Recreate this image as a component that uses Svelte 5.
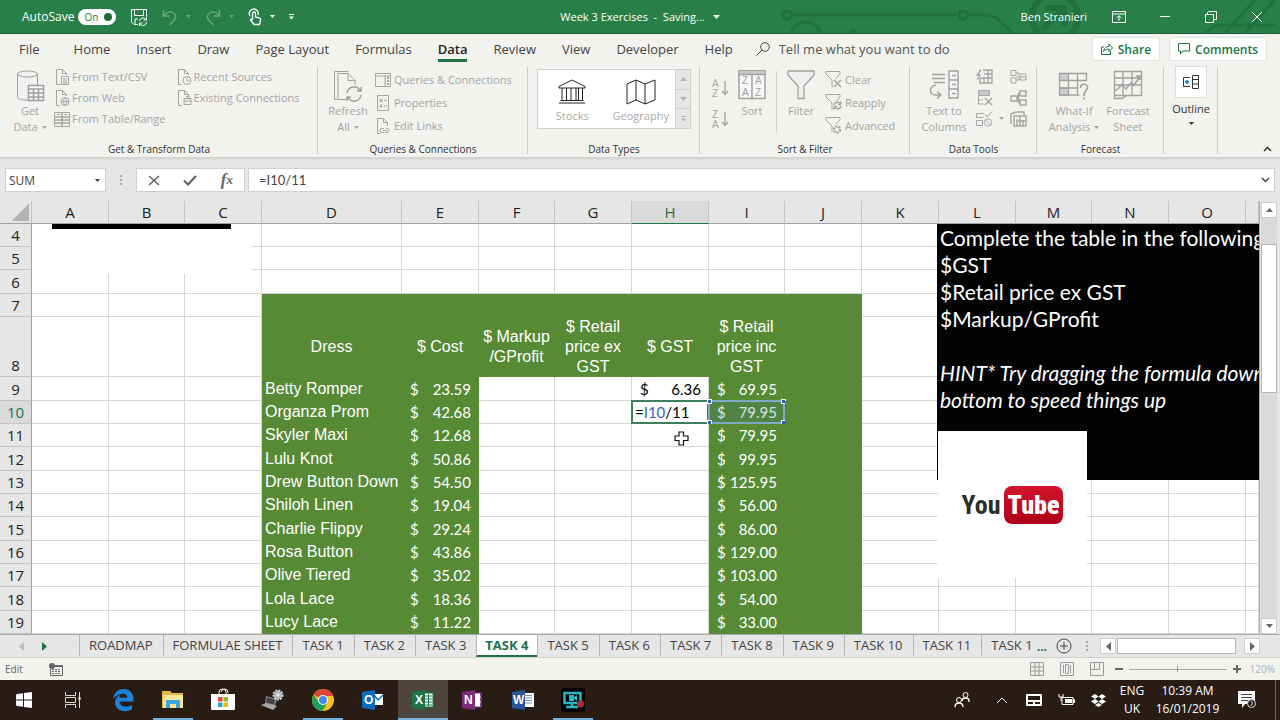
<script>
	const menu = ['File', 'Home', 'Insert', 'Draw', 'Page Layout', 'Formulas', 'Data', 'Review', 'View', 'Developer', 'Help'];

	const columns = [
		{ name: 'A', width: 77 },
		{ name: 'B', width: 76 },
		{ name: 'C', width: 77 },
		{ name: 'D', width: 140 },
		{ name: 'E', width: 77 },
		{ name: 'F', width: 76 },
		{ name: 'G', width: 77 },
		{ name: 'H', width: 77 },
		{ name: 'I', width: 76 },
		{ name: 'J', width: 77 },
		{ name: 'K', width: 77 },
		{ name: 'L', width: 77 },
		{ name: 'M', width: 76 },
		{ name: 'N', width: 77 },
		{ name: 'O', width: 77 },
		{ name: '', width: 0 }
	];

	const headings = {
		D: 'Dress',
		E: '$ Cost',
		F: '$ Markup\n/GProfit',
		G: '$ Retail\nprice ex\nGST',
		H: '$ GST',
		I: '$ Retail\nprice inc\nGST'
	};

	const dresses = [
		['Betty Romper', '23.59', '69.95'],
		['Organza Prom', '42.68', '79.95'],
		['Skyler Maxi', '12.68', '79.95'],
		['Lulu Knot', '50.86', '99.95'],
		['Drew Button Down', '54.50', '125.95'],
		['Shiloh Linen', '19.04', '56.00'],
		['Charlie Flippy', '29.24', '86.00'],
		['Rosa Button', '43.86', '129.00'],
		['Olive Tiered', '35.02', '103.00'],
		['Lola Lace', '18.36', '54.00'],
		['Lucy Lace', '11.22', '33.00']
	];

	const rows = Array.from({ length: 16 }, (_, i) => i + 4);

	const sheets = ['ROADMAP', 'FORMULAE SHEET', ...Array.from({ length: 11 }, (_, i) => `TASK ${i + 1}`)];

	let activeMenu = $state('Data');
	let activeSheet = $state('TASK 4');
	let autoSave = $state(true);
	let zoom = $state(50);
	let formula = $state('=I10/11');

	function isGreen(row, col) {
		if (row < 7 || !'DEFGHIJ'.includes(col) || !col) return false;
		return row < 9 || !'FGH'.includes(col);
	}

	function money(row, col) {
		const dress = dresses[row - 9];
		if (!dress) return '';
		if (col === 'E') return dress[1];
		if (col === 'I') return dress[2];
		if (col === 'H' && row === 9) return '6.36';
		return '';
	}

	// [width, height, markup]
	const icons = {
		save: [18, 18, '<path d="M1.500 1.500h15v7M8 16.500h-4l-2.500-2.500v-12.500M4.500 1.500v6h9v-6M5 16v-5h3"/><path d="M9.500 13a3.500 3.500 0 0 1 6-2l1 1m0-3v3h-3M16.500 14a3.500 3.500 0 0 1-6 2.500l-1-1m0 2.500v-3h3"/>'],
		undo: [16, 16, '<path stroke-width="1.500" d="M1.500 1v6h6M1.500 7c3-4 7-5 10-3s3 5 0 8l-4 4"/>'],
		redo: [16, 16, '<path stroke-width="1.500" d="M14.500 1v6h-6M14.500 7c-3-4-7-5-10-3s-3 5 0 8l4 4"/>'],
		touch: [14, 18, '<path stroke-width="1.300" d="M2 8a4.500 4.500 0 1 1 8-1M4.500 12V5.500a1.500 1.500 0 0 1 3 0V9l4 1q1.500.500 1 2l-1 4.500H6L2.500 12q0-1.500 2 0"/>'],
		display: [14, 12, '<path d="M.500.500h13v11h-13zM.500 3h13M7 10V5M4.500 7L7 4.800 9.500 7"/>'],
		restore: [12, 12, '<path d="M.500 3.500h8v8h-8zM2.500 3.500v-2l1-1h8v8h-3"/>'],
		close: [12, 12, '<path d="M1 1l10 10M11 1L1 11"/>'],
		search: [14, 14, '<circle cx="9" cy="5" r="4.300"/><path d="M6 8L.500 13.500"/>'],
		share: [12, 12, '<path d="M3 4H.500v7.500h9V8M2.500 8.500c.500-4 3-5 5.500-5V1l3.500 4L8 8.500V6c-2 0-4 .500-5.500 2.500z"/>'],
		comment: [12, 12, '<path d="M.500.500h11v7.500H5L2.500 11V8h-2z"/>'],
		database: [28, 32, '<path fill="#f0f0f0" d="M1.500 4v23c0 2 4 3 9 3h2V18h9V4"/><ellipse cx="11.500" cy="4" rx="10" ry="3"/><path fill="#f8f8f8" stroke-width="1.500" d="M12.500 15.500h15v15h-15zM12.500 19h15M12.500 23h15M12.500 27h15M17.500 19v11M22.500 19v11"/>'],
		text: [16, 16, '<path d="M6.500 15.500h-4V.500h6l4 4V6M8.500.500v4h4M7.500 7.500h7v8h-7zM9 10h4M9 12h4M9 14h4"/>'],
		web: [16, 16, '<path d="M6 15.500H2.500V.500h6l4 4V6M8.500.500v4h4"/><circle cx="11" cy="11.500" r="4"/><path d="M7 11.500h8M11 7.500c-2 2.500-2 5.500 0 8c2-2.500 2-5.500 0-8"/>'],
		table: [16, 16, '<path d="M.500 1.500h15v14h-15z"/><path stroke-width="1.500" d="M.500 6h15M.500 9h15M.500 12h15M8 1v14"/><path d="M3 3.500h3M10 3.500h3"/>'],
		recent: [16, 16, '<path d="M6 15.500H2.500V.500h6l4 4V6M8.500.500v4h4"/><circle cx="11" cy="11.500" r="4"/><path d="M11 9v3h2.500"/>'],
		existing: [16, 16, '<path d="M6 15.500H2.500V.500h6l4 4V6M8.500.500v4h4M8 8.500h7v6H8zM8 11h7M10 6.500h3v2"/>'],
		refresh: [30, 32, '<path d="M4 29.500H1.500v-28h14M14 29.500H5v-26h10l7 7V15M15 3.500v7h7"/><path stroke-width="1.500" d="M14 23a7 7 0 0 1 12-4l2 2m0-4v4h-4M28 25a7 7 0 0 1-12 4l-2-2m0 4v-4h4"/>'],
		queries: [16, 16, '<path d="M.500 1.500h15v13H.500zM.500 4h15M10 4v10"/><path stroke-width="2" stroke-dasharray="2 1" d="M13 5v8"/>'],
		properties: [16, 16, '<path d="M2.500.500h11v15h-11zM5 4.500h2v2H5zM5 10h2v2H5zM9 5.500h3M9 11h3"/>'],
		links: [16, 16, '<path d="M5 15.500H2.500V.500h6l4 4V8M8.500.500v4h4"/><path d="M9 10.500H7a2 2 0 0 0 0 4h2M11 10.500h1a2 2 0 0 1 0 4h-2M8 12.500h4"/>'],
		stocks: [28, 26, '<path d="M1 9v-1.500L14 1l13 6.500V9zM4 9v12M8.500 9v12M13 9v12M18 9v12M20.500 9v12M24.500 9v12M2.500 21.500h23M1 24h26"/>'],
		geography: [30, 26, '<path d="M1 5l9-4 9 4 10-4v20l-10 4-9-4-9 4zM10 1v20M19 5v20"/>'],
		sortAz: [16, 18, '<path stroke-width="1.400" d="M13 2v13M10 12l3 3.500 3-3.500"/><text x="0" y="8">A</text><text x="0" y="18">Z</text>'],
		sortZa: [16, 18, '<path stroke-width="1.400" d="M13 2v13M10 12l3 3.500 3-3.500"/><text x="0" y="8">Z</text><text x="0" y="18">A</text>'],
		sort: [28, 30, '<path fill="#c8c8c8" d="M.500.500h27v4H.500z"/><path fill="#f8f8f8" stroke-width="1.500" d="M1 4.500h13v24H1zM14 4.500h13v24H14z"/><text x="4" y="14">Z</text><text x="4" y="26">A</text><text x="17" y="14">A</text><text x="17" y="26">Z</text>'],
		filter: [28, 30, '<path fill="#efefef" stroke-width="1.300" d="M1 1h26v4L17 16v12.500h-6V16L1 5z"/>'],
		clear: [17, 17, '<path d="M7 15.500V9L1 3V.500h14V3l-4.500 5M7 15.500h1"/><path stroke-width="1.400" d="M9 9l7 7M16 9l-7 7"/>'],
		reapply: [17, 17, '<path d="M7 15.500V9L1 3V.500h14V3l-4 4"/><path stroke-width="1.400" d="M9 11c1-4 6-3 7-1V7.500m0 3h-3M16 12c-1 4-6 3-7 1v2.500m0-3h3"/>'],
		advanced: [17, 17, '<path d="M7 15.500V9L1 3V.500h14V3l-4 4"/><circle cx="12" cy="12.500" r="3" stroke-width="2.500" stroke-dasharray="2 1"/>'],
		columns: [30, 30, '<path stroke-width="1.300" d="M3 4.500h13M3 8.500h13M5 12.500h11M7 15c-8 2-7 10 0 10h4M8 21.500l4 3.500-4 3.500"/><path fill="#f5f5f5" stroke-width="1.400" d="M20 1h9v27h-9zM20 10h9M20 19h9M23 5.500h4M23 14.500h4M23 23.500h4"/>'],
		flash: [17, 16, '<path stroke-width="1.300" d="M7 1h9v13H4v-5M4 9h12M8 5h8M8 9v5M12 1v13"/><path stroke-width="1.300" d="M5 .500L1 6h3l-3 5"/>'],
		duplicates: [17, 16, '<path fill="#c8c8c8" d="M2.500.500h11v5h-11z"/><path d="M2.500 6v8h5M3 10h4"/><path stroke-width="1.500" d="M9 8l7 7M16 8l-7 7"/>'],
		validate: [17, 16, '<path d="M8 2.500H.500v4h7M.500 14.500v-5h6v5zM9 3l2 3 5-5.500"/><circle cx="12" cy="11.500" r="3.700"/><path d="M9.500 9l5 5"/>'],
		consolidate: [17, 16, '<path d="M1 1.500h5v5H1zM1 9h5v5H1zM10 5h6v6h-6zM6 8h3M6 4h3v2M6 11h3v-2M10 8h6"/>'],
		relations: [17, 16, '<path stroke-width="1.400" d="M1 6h6v5H1zM10 1h6v5h-6zM10 10h6v5h-6zM7 8h1.500V3.500H10M8.500 8v4.500H10"/>'],
		model: [17, 16, '<path stroke-width="1.400" d="M1 13V3l5-2h8v3M4 15V5h12v10zM7 15V8M10 15V6M13 15V9M8 10h7"/>'],
		whatif: [32, 30, '<path fill="#cfcfcf" d="M1.500 3.500h9v7h-9zM1.500 18h9v7h-9z"/><path stroke-width="1.300" d="M28.500 11V3.500h-27v21.500h20M1.500 10.500h27M1.500 18h18M10.500 3.500v21.500M19.500 3.500v21.500"/><path stroke-width="1.600" d="M22.500 18c0-6 8-4 7 0-1 3-3.500 3-3.500 8M26 27.500v2"/>'],
		forecast: [30, 30, '<path stroke-width="1.300" d="M1.500 1.500h27v24h-15l-4 3h-8zM1.500 8h27M1.500 15h27M10 1.500v24M19 1.500v24M1.500 25.500h12"/><path stroke-width="1.500" d="M2 21l7-6 4 4 5-6 3 2 6-8M23 6h4v4"/>'],
		outline: [16, 14, '<path d="M9.500.500h6v13h-6zM9.500 4.500h6M9.500 9h6M7 2.500H.500v9H7" stroke="#333"/><path d="M4 5v4M2 7h4" stroke="#2a8dd4" stroke-width="2"/>'],
		caret: [5, 3, '<path class="f" d="M0 0h5L2.500 3z"/>'],
		up: [7, 4, '<path class="f" d="M0 4h7L3.500 0z"/>'],
		down: [7, 4, '<path class="f" d="M0 0h7L3.500 4z"/>'],
		left: [5, 9, '<path class="f" d="M5 0v9L0 4.500z"/>'],
		right: [5, 9, '<path class="f" d="M0 0v9l5-4.500z"/>'],
		chevron: [9, 6, '<path stroke-width="1.500" d="M1 1l3.500 3.500L8 1"/>'],
		chevronUp: [9, 6, '<path stroke-width="1.500" d="M1 5l3.500-3.500L8 5"/>'],
		bars: [5, 6, '<path class="f" d="M0 0h5v1H0zM0 2.500h5L2.500 5.500z"/>'],
		cancel: [12, 11, '<path stroke-width="1.600" d="M1 1l10 9M11 1L1 10"/>'],
		enter: [14, 11, '<path stroke-width="2.200" d="M1 5.500L5 9.500 13 1"/>'],
		macro: [14, 13, '<path d="M4 2.500h9.500v10H1.500V6"/><circle class="f" cx="3" cy="3" r="3"/><path stroke-width="2" d="M6 3h7"/><path stroke-dasharray="2 1" d="M3 6.500h9M3 8.500h9M3 10.500h9"/>'],
		normal: [14, 14, '<path d="M.500.500h13v13H.500zM.500 5h13M.500 9h13M5 .500v13M9 .500v13"/>'],
		pageLayout: [14, 14, '<path d="M.500.500h13v13H.500zM3.500 3v8M10.500 3v8M5.500 2.500h3v9h-3z"/>'],
		pageBreak: [14, 14, '<path d="M.500.500h13v13H.500zM4.500.500v7h5v-7M.500 7.500h4"/>'],
		plus: [8, 8, '<path stroke-width="2" d="M4 0v8M0 4h8"/>'],
		minus: [8, 8, '<path stroke-width="2" d="M0 4h8"/>'],
		addSheet: [16, 16, '<circle cx="8" cy="8" r="7"/><path d="M8 4v8M4 8h8"/>'],
		windows: [16, 16, '<path class="f" d="M0 2.300l7-1V7.500H0zM8 1.100L16 0v7.500H8zM0 8.500h7v6.200l-7-1zM8 8.500h8V16l-8-1.100z"/>'],
		taskview: [18, 16, '<path stroke="#ddd" d="M1.500 0v3.500h10V0M1.500 16v-3.500h10V16M1.500 5.500h10v5h-10zM15.500 0v5M15.500 8v8"/><path stroke="#fff" stroke-width="2" d="M15.500 5v3"/>'],
		edge: [22, 22, '<path fill="#1c83d8" stroke="none" d="M1 10C2 4 6 0 11.500 0 18 0 21.500 4.500 21.500 10v2.500H7.500c.500 5.500 7.500 6.500 12.500 3.500v4.500C12 24.500 2.500 21 3 13c.200-3.500 2.500-6 5.500-7.500C7.800 6.500 7.400 7.500 7.400 8.800h8c0-6-9.500-5.300-14.400 1.200z"/>'],
		folder: [22, 20, '<path fill="#e9b64a" stroke="none" d="M0 1h8l2 2h11v15H0z"/><path fill="#fde69a" stroke="none" d="M1 5h20v13H1z"/><path fill="#3ca5dc" stroke="none" d="M4 18v-7q0-1 1-1h12q1 0 1 1v7h-4v-4H8v4z"/>'],
		store: [24, 24, '<path stroke="#fff" d="M8 6V4q0-3 3.500-3T15 4v2M10 4q1-3 4-3t3 4"/><path fill="#fff" stroke="none" d="M0 6h24v15q0 1-1 1H1q-1 0-1-1z"/><path fill="#e64a26" stroke="none" d="M7 9h4.500v4.500H7z"/><path fill="#8cbd18" stroke="none" d="M12.500 9H17v4.500h-4.500z"/><path fill="#2a9fe0" stroke="none" d="M7 14.500h4.500V19H7z"/><path fill="#f5b800" stroke="none" d="M12.500 14.500H17V19h-4.500z"/>'],
		laptop: [24, 22, '<path fill="#85878a" stroke="none" d="M5 7l11 3-2 7L4 14z"/><path fill="#414347" stroke="none" d="M6 8.500l8 2-1 5-8-2z"/><path fill="#aaa" stroke="none" d="M0 16l5-2 11 3-4 4z"/><circle cx="17" cy="6" r="4.500" stroke="#d6d6d6" stroke-width="2" stroke-dasharray="2 1"/><circle cx="17" cy="6" r="4" fill="#b9bdc2" stroke="none"/><circle cx="17" cy="6" r="1.500" fill="#eee" stroke="none"/>'],
		chrome: [22, 22, '<circle cx="11" cy="11" r="11" fill="#fbc116" stroke="none"/><path fill="#dc4437" stroke="none" d="M11 11L1.500 5.500A11 11 0 0 1 20.500 5.500L21 7H11z"/><path fill="#1ba260" stroke="none" d="M1.500 5.500A11 11 0 0 0 10.500 22L15 14 11 11 6 12z"/><circle cx="11" cy="11" r="5" fill="#fff" stroke="none"/><circle cx="11" cy="11" r="4" fill="#4587f3" stroke="none"/>'],
		outlook: [22, 20, '<path fill="#fff" stroke="none" d="M11 4h10v11H11z"/><path stroke="#1072c4" stroke-width="1.500" d="M12 5l4 5 5-5"/><path fill="#0d6cbd" stroke="none" d="M0 2l13-2v20L0 18z"/><text x="2" y="14" class="app">O</text>'],
		excel: [22, 20, '<path fill="#fff" stroke="#1b7544" d="M11 3h10v14H11z"/><path stroke="#1b7544" d="M12 6h8M12 9h8M12 12h8M12 15h8M16.500 4v12"/><path fill="#1b7544" stroke="none" d="M0 2l13-2v20L0 18z"/><text x="3" y="14" class="app">X</text>'],
		onenote: [22, 20, '<path fill="#fff" stroke="#7f397f" d="M11 3h8v14h-8z"/><path stroke="#7f397f" stroke-width="2" d="M19 3v3M19 8v3M19 13v3"/><path fill="#7d2a7d" stroke="none" d="M0 2l13-2v20L0 18z"/><text x="2" y="14" class="app">N</text>'],
		word: [22, 20, '<path fill="#fff" stroke="none" d="M11 3h11v14H11z"/><path stroke="#7390bd" d="M12 5.500h8M12 8h8M12 10.500h8M12 13h8"/><path fill="#2a5699" stroke="none" d="M0 2l13-2v20L0 18z"/><text x="1" y="14" class="app">W</text>'],
		recorder: [24, 24, '<rect width="24" height="24" rx="3" fill="#000" stroke="none"/><path stroke="#27b6c7" stroke-width="2.500" d="M3.500 5h16v10h-16zM11 15v3M5 19h12"/><path fill="#27b6c7" stroke="none" d="M8 7h5v2l3-2v6l-3-2v2H8z"/><circle cx="19.500" cy="16" r="3.500" fill="#b62735" stroke="none"/>'],
		people: [16, 16, '<circle cx="5" cy="8" r="2.500"/><circle cx="11.500" cy="3" r="2.500"/><path stroke-width="1.400" d="M1 15q0-4 4-4t4 4M8 9q0-3 3.500-3T15 9v1"/>'],
		tray: [12, 7, '<path d="M1 6l5-5 5 5"/>'],
		keyboard: [16, 12, '<rect width="16" height="12" rx="1" fill="#fff" stroke="none"/><path fill="#261a13" stroke="none" d="M2 2h12v4H2zM2 8h5v2H2zM9 8h5v2H9z"/>'],
		battery: [17, 14, '<path d="M4 4.500h11v7H4zM15.500 6.500h1v3h-1zM1 1v3h4V1M3 4v4"/><path class="f" d="M7 6h7v4H7z"/>'],
		dropbox: [15, 13, '<path class="f" d="M4 0L0 2.500 4 5l3.500-2.500zM11 0L7.500 2.500 11 5l4-2.500zM4 5L0 7.500 4 10l3.500-2.500zM11 5L7.500 7.500 11 10l4-2.500zM7.500 9L4 11l3.500 2 3.500-2z"/>'],
		notice: [18, 18, '<path class="f" d="M0 0h17v13H7l-3 4v-4H0z"/><path stroke="#444" d="M3 3.500h11M3 6.500h11M3 9.500h7"/><circle cx="13.500" cy="12.500" r="4" fill="#261a13" stroke="#ddd"/><path stroke="#ddd" d="M13 10q3 2 0 5"/>'],
		cursor: [15, 15, '<path fill="#fff" stroke="#111" stroke-width="1.200" d="M5 1h4.500v4H14v4.500H9.500V14H5V9.500H1V5h4z"/>']
	};

	const taskApps = [
		{ icon: 'edge', label: 'Edge' },
		{ icon: 'folder', label: 'File Explorer', running: true },
		{ icon: 'store', label: 'Store' },
		{ icon: 'laptop', label: 'Device settings' },
		{ icon: 'chrome', label: 'Chrome', running: true },
		{ icon: 'outlook', label: 'Outlook' },
		{ icon: 'excel', label: 'Excel', running: true, active: true },
		{ icon: 'onenote', label: 'OneNote' },
		{ icon: 'word', label: 'Word' },
		{ icon: 'recorder', label: 'Screen recorder', running: true }
	];
</script>

{#snippet icon(name)}
	<svg class="icon" width={icons[name][0]} height={icons[name][1]} viewBox="0 0 {icons[name][0]} {icons[name][1]}" aria-hidden="true">
		{@html icons[name][2]}
	</svg>
{/snippet}

{#snippet big(name, first, second = '', arrow = false)}
	<button class="big" disabled>
		<span class="big__icon">{@render icon(name)}</span>
		<span>{first}</span>
		{#if second || arrow}
			<span class="big__line">{second}{#if arrow}{@render icon('caret')}{/if}</span>
		{/if}
	</button>
{/snippet}

{#snippet small(name, label)}
	<button class="small" disabled>{@render icon(name)}<span>{label}</span></button>
{/snippet}

<div class="screen">
	<header class="title">
		<svg class="title__art" width="500" height="33" viewBox="0 0 500 33" aria-hidden="true">
			<circle cx="7" cy="15" r="4" />
			<path d="M12 15h164M187 15h18q10 0 16 7l14 13M425 33l12-8h58M445 33l30-33M465 33l30-33" />
			<circle cx="26" cy="37" r="15" />
			<circle cx="183" cy="15" r="4" />
			<circle cx="275" cy="17" r="23" stroke-width="6" />
			<path d="M262 30l22-22M266 8h18v18" stroke-width="6" />
			<circle cx="73" cy="33" r="2" />
		</svg>
		<div class="title__left">
			<label class="autosave">
				<span>AutoSave</span>
				<input type="checkbox" bind:checked={autoSave} />
				<span class="autosave__pill">{autoSave ? 'On' : 'Off'}<i></i></span>
			</label>
			<button class="bare" aria-label="Save">{@render icon('save')}</button>
			<button class="bare faded" aria-label="Undo">{@render icon('undo')}{@render icon('caret')}</button>
			<button class="bare faded" aria-label="Redo">{@render icon('redo')}{@render icon('caret')}</button>
			<button class="bare" aria-label="Touch mode">{@render icon('touch')}{@render icon('caret')}</button>
			<button class="bare" aria-label="Customize toolbar">{@render icon('bars')}</button>
		</div>
		<button class="bare title__doc">Week 3 Exercises&nbsp; -&nbsp; Saving... {@render icon('down')}</button>
		<div class="title__right">
			<span class="user">Ben Stranieri</span>
			<button class="bare win" aria-label="Ribbon display options">{@render icon('display')}</button>
			<button class="bare win" aria-label="Minimize"><span class="dash"></span></button>
			<button class="bare win" aria-label="Restore">{@render icon('restore')}</button>
			<button class="bare win" aria-label="Close">{@render icon('close')}</button>
		</div>
	</header>

	<nav class="menu">
		{#each menu as item}
			<button class="menu__item" class:is-active={activeMenu === item} onclick={() => (activeMenu = item)}>{item}</button>
		{/each}
		<label class="tell">
			{@render icon('search')}
			<input type="text" aria-label="Tell me what you want to do" placeholder="Tell me what you want to do" />
		</label>
		<div class="menu__actions">
			<button class="action">{@render icon('share')}Share</button>
			<button class="action">{@render icon('comment')}Comments</button>
		</div>
	</nav>

	<section class="ribbon">
		<div class="group group--get">
			<div class="group__body">
				{@render big('database', 'Get', 'Data', true)}
				<div class="stack stack--tight">
					{@render small('text', 'From Text/CSV')}
					{@render small('web', 'From Web')}
					{@render small('table', 'From Table/Range')}
				</div>
				<div class="stack stack--tight">
					{@render small('recent', 'Recent Sources')}
					{@render small('existing', 'Existing Connections')}
				</div>
			</div>
			<div class="group__label">Get &amp; Transform Data</div>
		</div>
		<div class="group group--wide">
			<div class="group__body">
				{@render big('refresh', 'Refresh', 'All', true)}
				<div class="stack">
					{@render small('queries', 'Queries & Connections')}
					{@render small('properties', 'Properties')}
					{@render small('links', 'Edit Links')}
				</div>
			</div>
			<div class="group__label">Queries &amp; Connections</div>
		</div>
		<div class="group group--types">
			<div class="group__body">
				<div class="gallery">
					<button class="gallery__item">{@render icon('stocks')}<span>Stocks</span></button>
					<button class="gallery__item">{@render icon('geography')}<span>Geography</span></button>
					<div class="gallery__scroll">
						<button aria-label="Previous row">{@render icon('up')}</button>
						<button aria-label="Next row">{@render icon('down')}</button>
						<button aria-label="More">{@render icon('bars')}</button>
					</div>
				</div>
			</div>
			<div class="group__label">Data Types</div>
		</div>
		<div class="group group--wide">
			<div class="group__body">
				<div class="stack stack--sort">
					<button class="small" aria-label="Sort A to Z" disabled>{@render icon('sortAz')}</button>
					<button class="small" aria-label="Sort Z to A" disabled>{@render icon('sortZa')}</button>
				</div>
				{@render big('sort', 'Sort')}
				<div class="rule"></div>
				{@render big('filter', 'Filter')}
				<div class="stack stack--filter">
					{@render small('clear', 'Clear')}
					{@render small('reapply', 'Reapply')}
					{@render small('advanced', 'Advanced')}
				</div>
			</div>
			<div class="group__label">Sort &amp; Filter</div>
		</div>
		<div class="group group--tools">
			<div class="group__body">
				{@render big('columns', 'Text to', 'Columns')}
				<div class="tools">
					{#each ['flash', 'consolidate', 'duplicates', 'relations', 'validate', 'model'] as name}
						<button class="small" aria-label={name} disabled>{@render icon(name)}{#if name === 'validate'}{@render icon('caret')}{/if}</button>
					{/each}
				</div>
			</div>
			<div class="group__label">Data Tools</div>
		</div>
		<div class="group group--forecast">
			<div class="group__body">
				{@render big('whatif', 'What-If', 'Analysis', true)}
				{@render big('forecast', 'Forecast', 'Sheet')}
			</div>
			<div class="group__label">Forecast</div>
		</div>
		<div class="group group--outline">
			<button class="outline">
				<span class="outline__box">{@render icon('outline')}</span>
				<span>Outline</span>
				{@render icon('caret')}
			</button>
		</div>
		<button class="bare collapse" aria-label="Collapse the ribbon">{@render icon('chevronUp')}</button>
	</section>

	<section class="formula">
		<div class="formula__name">
			<input type="text" aria-label="Name box" value="SUM" />
			{@render icon('caret')}
		</div>
		<div class="grip"></div>
		<div class="formula__tools">
			<button class="bare" aria-label="Cancel">{@render icon('cancel')}</button>
			<button class="bare" aria-label="Enter">{@render icon('enter')}</button>
			<button class="bare fx" aria-label="Insert function"><i>f</i><i class="fx__x">x</i></button>
		</div>
		<div class="formula__bar">
			<input type="text" aria-label="Formula" bind:value={formula} />
			{@render icon('chevron')}
		</div>
	</section>

	<main class="sheet">
		<div class="sheet__view">
			<table>
				<colgroup>
					<col class="col-row" />
					{#each columns as col}
						<col style={col.width ? `width: ${col.width}px` : ''} />
					{/each}
				</colgroup>
				<thead>
					<tr>
						<th class="corner" aria-label="Select all"><span></span></th>
						{#each columns as col}
							<th class:is-current={col.name === 'H'}>{col.name}</th>
						{/each}
					</tr>
				</thead>
				<tbody>
					{#each rows as row}
						<tr class:tall={row === 8}>
							<th class:is-current={row === 10}>{row}</th>
							{#each columns as { name }}
								<td class:green={isGreen(row, name)} class:heading={row === 8}>
									{#if row === 8}
										{headings[name] ?? ''}
									{:else if row === 10 && name === 'H'}
										<div class="editing">=<span>I10</span>/11</div>
									{:else if row > 8 && name === 'D'}
										<div class="name">{dresses[row - 9][0]}</div>
									{:else if money(row, name)}
										<div class="money"><span>$</span><span>{money(row, name)}</span></div>
									{/if}
									{#if row === 10 && name === 'I'}
										<div class="range"><i></i><i></i><i></i><i></i></div>
									{/if}
									{#if row === 11 && name === 'H'}
										<div class="pointer">{@render icon('cursor')}</div>
									{/if}
								</td>
							{/each}
						</tr>
					{/each}
				</tbody>
			</table>

			<div class="shape shape--blank"></div>
			<div class="shape shape--note">
				<p>Complete the table in the following:</p>
				<p>$GST</p>
				<p>$Retail price ex GST</p>
				<p>$Markup/GProfit</p>
				<p>&nbsp;</p>
				<p><em>HINT* Try dragging the formula down to the</em></p>
				<p><em>bottom to speed things up</em></p>
			</div>
			<a class="shape shape--video" href="#video" aria-label="YouTube"><span>You</span><b>Tube</b></a>
		</div>
		<div class="vscroll">
			<button aria-label="Scroll up">{@render icon('up')}</button>
			<div class="vscroll__track"><div class="vscroll__thumb"></div></div>
			<button aria-label="Scroll down">{@render icon('down')}</button>
		</div>
	</main>

	<nav class="tabs">
		<div class="tabs__arrows">
			<button class="bare faded" aria-label="Previous sheets">{@render icon('left')}</button>
			<button class="bare" aria-label="Next sheets">{@render icon('right')}</button>
		</div>
		<div class="tabs__list">
			{#each sheets as sheet}
				<button class="tab" class:is-active={activeSheet === sheet} onclick={() => (activeSheet = sheet)}>{sheet}</button>
			{/each}
			<button class="tab">TASK 12</button>
		</div>
		<button class="bare tabs__more">...</button>
		<button class="bare" aria-label="New sheet">{@render icon('addSheet')}</button>
		<div class="grip"></div>
		<div class="hscroll">
			<button aria-label="Scroll left">{@render icon('left')}</button>
			<div class="hscroll__thumb"></div>
			<button aria-label="Scroll right">{@render icon('right')}</button>
		</div>
	</nav>

	<footer class="status">
		<span>Edit</span>
		<button class="bare status__macro" aria-label="Record macro">{@render icon('macro')}</button>
		<div class="status__views">
			<button class="bare" aria-label="Normal">{@render icon('normal')}</button>
			<button class="bare" aria-label="Page layout">{@render icon('pageLayout')}</button>
			<button class="bare" aria-label="Page break preview">{@render icon('pageBreak')}</button>
		</div>
		<div class="zoom">
			<button class="bare" aria-label="Zoom out">{@render icon('minus')}</button>
			<input type="range" aria-label="Zoom" bind:value={zoom} />
			<button class="bare" aria-label="Zoom in">{@render icon('plus')}</button>
			<span>120%</span>
		</div>
	</footer>

	<div class="taskbar">
		<button class="task" aria-label="Start">{@render icon('windows')}</button>
		<button class="task" aria-label="Task view">{@render icon('taskview')}</button>
		{#each taskApps as app}
			<button class="task" class:is-running={app.running} class:is-active={app.active} aria-label={app.label}>{@render icon(app.icon)}</button>
		{/each}
		<div class="tray">
			<button class="bare" aria-label="People">{@render icon('people')}</button>
			<button class="bare" aria-label="Hidden icons">{@render icon('tray')}</button>
			<button class="bare" aria-label="Touch keyboard">{@render icon('keyboard')}</button>
			<button class="bare" aria-label="Battery">{@render icon('battery')}</button>
			<button class="bare" aria-label="Dropbox">{@render icon('dropbox')}</button>
			<div class="tray__text tray__lang"><span>ENG</span><span>UK</span></div>
			<div class="tray__text tray__clock"><span>10:39 AM</span><span>16/01/2019</span></div>
			<button class="bare tray__notice" aria-label="Notifications">{@render icon('notice')}</button>
		</div>
	</div>
</div>

<style>
	:global(body) {
		margin: 0;
	}

	.screen {
		display: flex;
		flex-direction: column;
		height: 100vh;
		overflow: hidden;
		background: #e6e6e6;
		color: #333;
		font-family: 'Open Sans', 'Noto Sans', sans-serif;
		font-size: 12px;
	}

	.screen :global(*) {
		box-sizing: border-box;
	}

	button,
	input {
		font: inherit;
		color: inherit;
	}

	button {
		padding: 0;
		border: 0;
		background: transparent;
		white-space: nowrap;
	}

	input {
		min-width: 0;
		border: 0;
		padding: 0;
		outline: 0;
		background: transparent;
	}

	.bare {
		display: flex;
		align-items: center;
		justify-content: center;
	}

	.icon {
		display: block;
		flex-shrink: 0;
		fill: none;
		stroke: currentColor;
		stroke-width: 1;
		overflow: visible;
	}

	.icon :global(.f) {
		fill: currentColor;
		stroke: none;
	}

	.icon :global(text) {
		fill: currentColor;
		stroke: none;
		font-family: 'Liberation Sans', Arial, sans-serif;
		font-size: 10px;
	}

	.icon :global(text.app) {
		fill: #fff;
		font-size: 12px;
		font-weight: 700;
	}

	/* title bar */

	.title {
		position: relative;
		display: flex;
		justify-content: space-between;
		height: 34px;
		flex-shrink: 0;
		border-bottom: 1px solid #1c6135;
		background: #288048;
		color: #fff;
		overflow: hidden;
	}

	.title__art {
		position: absolute;
		top: 0;
		right: 0;
		fill: none;
		stroke: #21703d;
		stroke-width: 3;
	}

	.title__left,
	.title__right {
		display: flex;
		align-items: center;
		flex: 1 1 0;
	}

	.title__left {
		padding-left: 22px;
		gap: 14px;
	}

	.title__left .bare {
		gap: 8px;
	}

	.title__right {
		position: relative;
		justify-content: flex-end;
	}

	.title__doc {
		gap: 8px;
		padding-right: 22px;
		font-size: 11px;
	}

	.autosave {
		display: flex;
		align-items: center;
		gap: 4px;
	}

	.autosave input {
		position: absolute;
		opacity: 0;
	}

	.autosave__pill {
		display: flex;
		align-items: center;
		justify-content: space-between;
		width: 38px;
		height: 16px;
		padding: 0 4px 0 6px;
		border-radius: 8px;
		background: #fff;
		color: #288048;
		font-size: 10px;
	}

	.autosave__pill i {
		width: 8px;
		height: 8px;
		border-radius: 50%;
		background: #1f6a3b;
	}

	.faded {
		opacity: 0.3;
	}

	.user {
		padding-right: 9px;
		font-size: 11px;
	}

	.win {
		width: 46px;
		height: 100%;
	}

	.dash {
		width: 10px;
		height: 1px;
		background: #fff;
	}

	/* menu */

	.menu {
		display: flex;
		align-items: center;
		height: 32px;
		flex-shrink: 0;
		padding: 0 13px 2px 6px;
		background: #f2f2ee;
		color: #444;
		font-size: 13px;
	}

	.menu__item {
		position: relative;
		height: 100%;
		padding: 0 13px;
	}

	.menu__item:first-child {
		margin-right: 8px;
	}

	.menu__item.is-active {
		color: #222;
		font-weight: 600;
	}

	.menu__item.is-active::after {
		content: '';
		position: absolute;
		right: 13px;
		bottom: 2px;
		left: 13px;
		height: 3px;
		background: #217346;
	}

	.tell {
		display: flex;
		align-items: center;
		gap: 9px;
		flex: 1;
		padding-left: 10px;
	}

	.tell input {
		flex: 1;
	}

	.tell input::placeholder {
		color: #555;
		opacity: 1;
	}

	.menu__actions {
		display: flex;
		gap: 9px;
	}

	.action {
		display: flex;
		align-items: center;
		gap: 5px;
		height: 24px;
		padding: 0 8px;
		border: 1px solid #e3e3df;
		border-radius: 2px;
		background: #fff;
		color: #217346;
		font-size: 12px;
		font-weight: 600;
	}

	/* ribbon */

	.ribbon {
		display: flex;
		height: 91px;
		flex-shrink: 0;
		background: #f2f2ee;
		color: #333;
		font-size: 11px;
	}

	.group {
		position: relative;
		display: flex;
		flex-direction: column;
	}

	.group::after {
		content: '';
		position: absolute;
		top: 1px;
		right: 0;
		bottom: 3px;
		width: 1px;
		background: #c9c9c6;
	}

	.group--get {
		width: 318px;
	}

	.group--wide {
		width: 210px;
	}

	.group--types {
		width: 172px;
	}

	.group--tools,
	.group--forecast {
		width: 127px;
	}

	.group--outline {
		width: 54px;
	}

	.group__body {
		display: flex;
		flex: 1;
		padding: 0 6px;
	}

	.group--tools .group__body,
	.group--forecast .group__body {
		padding: 0 10px;
	}

	.group__label {
		height: 15px;
		font-size: 10px;
		line-height: 15px;
		text-align: center;
	}

	.big {
		display: flex;
		flex-direction: column;
		flex-shrink: 0;
		align-items: center;
		width: 48px;
		padding-top: 4px;
		color: #a5a5a5;
		line-height: 16px;
	}

	.group--forecast .big {
		width: 54px;
	}

	.big__icon {
		display: flex;
		align-items: flex-start;
		height: 33px;
		color: #a0a0a0;
	}

	.big__line {
		display: flex;
		align-items: center;
		gap: 4px;
	}

	.stack {
		display: flex;
		flex-direction: column;
		padding: 2px 0 0 3px;
	}

	.stack .small {
		height: 23px;
	}

	.stack--tight {
		padding: 0 10px 0 0;
	}

	.stack--tight .small {
		height: 21px;
		gap: 2px;
	}

	.stack--sort {
		padding: 6px 0 0 6px;
	}

	.stack--sort .small {
		height: 31px;
	}

	.stack--filter {
		padding-left: 0;
	}

	.small {
		display: flex;
		align-items: center;
		gap: 3px;
		color: #a5a5a5;
		line-height: 16px;
	}

	.rule {
		width: 1px;
		height: 62px;
		margin-top: 5px;
		background: #d0d0cd;
	}

	.gallery {
		display: flex;
		width: 154px;
		height: 60px;
		margin: 3px 0 0 3px;
		border: 1px solid #d0d0d0;
		background: #fff;
	}

	.gallery__item {
		display: flex;
		flex: 1;
		flex-direction: column;
		align-items: center;
		justify-content: flex-end;
		gap: 3px;
		padding-bottom: 4px;
		color: #222;
		line-height: 16px;
	}

	.gallery__item span {
		color: #aaa;
	}

	.gallery__scroll {
		display: flex;
		flex-direction: column;
		width: 15px;
		border-left: 1px solid #d0d0d0;
		background: #e6e6e6;
		color: #b5b5b5;
	}

	.gallery__scroll button {
		display: flex;
		flex: 1;
		align-items: center;
		justify-content: center;
	}

	.gallery__scroll button + button {
		border-top: 1px solid #d0d0d0;
	}

	.tools {
		display: grid;
		grid-template-columns: 34px 18px;
		grid-auto-rows: 21px;
		padding-left: 8px;
	}

	.tools .small {
		gap: 6px;
	}

	.outline {
		display: flex;
		flex-direction: column;
		align-items: center;
		color: #333;
		line-height: 22px;
	}

	.outline__box {
		display: flex;
		align-items: center;
		justify-content: center;
		width: 32px;
		height: 32px;
		border: 1px solid #ddd;
		background: #fff;
	}

	.outline > :global(.icon) {
		margin-top: 2px;
	}

	.collapse {
		align-self: flex-end;
		margin: 0 8px 5px auto;
	}

	/* formula bar */

	.formula {
		display: flex;
		align-items: center;
		height: 44px;
		flex-shrink: 0;
		padding: 2px 5px 0;
		background: linear-gradient(#cfcfcf, #e6e6e6 4px);
		color: #444;
	}

	.formula__name,
	.formula__tools,
	.formula__bar {
		display: flex;
		align-items: center;
		height: 24px;
		border: 1px solid #d0d0d0;
		background: #fff;
	}

	.formula__name {
		width: 101px;
		padding: 0 5px 0 3px;
	}

	.formula__name input,
	.formula__bar input {
		flex: 1;
	}

	.formula__tools {
		width: 109px;
		justify-content: space-between;
		padding: 0 11px;
		color: #666;
	}

	.formula__bar {
		flex: 1;
		margin-left: 3px;
		padding: 0 4px 0 10px;
		font-family: Lato, sans-serif;
		font-size: 13px;
	}

	.fx {
		font: italic 700 17px 'Liberation Serif', serif;
	}

	.fx__x {
		font-size: 13px;
	}

	.grip {
		width: 2px;
		height: 11px;
		margin: 0 14px;
		background: repeating-linear-gradient(#aaa 0 2px, transparent 2px 4px);
	}

	/* sheet */

	.sheet {
		display: flex;
		flex: 1;
		min-height: 0;
		border-bottom: 1px solid #ababab;
	}

	.sheet__view {
		position: relative;
		flex: 1;
		overflow: hidden;
		border-right: 1px solid #ababab;
	}

	table {
		width: 100%;
		border-spacing: 0;
		table-layout: fixed;
		background: #fff;
		color: #000;
		font-family: Lato, Carlito, sans-serif;
		font-size: 15px;
	}

	.col-row {
		width: 32px;
	}

	th {
		padding: 0;
		border-right: 1px solid #c3c3c3;
		border-bottom: 1px solid #c3c3c3;
		background: #e6e6e6;
		color: #222;
		font-family: 'Open Sans', 'Noto Sans', sans-serif;
		font-weight: 400;
		line-height: 22px;
		vertical-align: bottom;
	}

	thead th {
		height: 23px;
		border-bottom-color: #a0a0a0;
	}

	tbody th {
		border-right-color: #a0a0a0;
	}

	th.is-current {
		background: #dadada;
		color: #217346;
	}

	thead th.is-current {
		border-bottom-color: #217346;
	}

	.corner span {
		display: block;
		width: 17px;
		height: 17px;
		margin: 0 2px 2px auto;
		background: linear-gradient(135deg, transparent 50%, #b3b3b3 50%);
	}

	tbody tr {
		height: 23px;
	}

	tbody tr:nth-child(3n) {
		height: 24px;
	}

	tbody tr.tall {
		height: 60px;
	}

	td {
		position: relative;
		padding: 0;
		border-right: 1px solid #d6d6d6;
		border-bottom: 1px solid #d6d6d6;
		line-height: 22px;
		white-space: pre-line;
		vertical-align: bottom;
	}

	td.green {
		border-color: #568a35;
		background: #568a35;
		color: #fff;
	}

	td.heading {
		border-bottom: 0;
		font: 16px/20px 'Liberation Sans', Arial, sans-serif;
		text-align: center;
		vertical-align: middle;
	}

	td.heading:not(.green) {
		box-shadow: inset 0 -1px #d6d6d6;
	}

	.name {
		padding-left: 3px;
		font: 16px/22px 'Liberation Sans', Arial, sans-serif;
		white-space: nowrap;
	}

	.money {
		display: flex;
		justify-content: space-between;
		padding: 0 7px 0 8px;
	}

	.editing {
		position: absolute;
		inset: -1px;
		padding-left: 2px;
		border: 2px solid #3c7f5b;
		background: #fff;
		line-height: 21px;
	}

	.editing span {
		color: #3f66b5;
	}

	.range {
		position: absolute;
		inset: -1px;
		border: 2px solid #7fa9c4;
		background: rgba(60, 110, 130, 0.2);
	}

	.range i {
		position: absolute;
		top: -3px;
		left: -3px;
		width: 5px;
		height: 5px;
		border: 1px solid #fff;
		background: #2d5fae;
	}

	.range i:nth-child(2n) {
		right: -3px;
		left: auto;
	}

	.range i:nth-child(n + 3) {
		top: auto;
		bottom: -3px;
	}

	.pointer {
		position: absolute;
		top: 7px;
		right: 19px;
	}

	.shape {
		position: absolute;
	}

	.shape--blank {
		top: 23px;
		left: 32px;
		width: 220px;
		height: 50px;
		background: linear-gradient(#000, #000) 20px 0 / 179px 5px no-repeat #fff;
	}

	.shape--note {
		top: 23px;
		right: 0;
		left: 937px;
		height: 256px;
		padding-left: 3px;
		overflow: hidden;
		background: #030303;
		color: #fff;
		font-family: Lato, Carlito, sans-serif;
		font-size: 21px;
		line-height: 27px;
		white-space: nowrap;
	}

	.shape--note p {
		margin: 0;
	}

	.shape--video {
		display: flex;
		align-items: center;
		justify-content: center;
		gap: 3px;
		top: 230px;
		left: 938px;
		width: 149px;
		height: 147px;
		background: #fff;
		color: #2c2c2c;
		font: 700 26px/38px 'Roboto Condensed', Roboto, sans-serif;
		text-decoration: none;
	}

	.shape--video b {
		padding: 0 4px;
		border-radius: 8px;
		background: linear-gradient(#d3152b, #ad0019);
		color: #fff;
	}

	.vscroll {
		display: flex;
		flex-direction: column;
		width: 20px;
		padding: 1px 3px 0 1px;
	}

	.vscroll button,
	.hscroll button {
		display: flex;
		align-items: center;
		justify-content: center;
		width: 16px;
		height: 16px;
		flex-shrink: 0;
		border: 1px solid #cfcfcf;
		background: #fff;
		color: #666;
	}

	.vscroll__track {
		flex: 1;
		width: 16px;
		padding-top: 26px;
		background: #dadada;
	}

	.vscroll__thumb {
		height: 149px;
		border: 1px solid #b5b5b5;
		background: #fff;
	}

	/* sheet tabs */

	.tabs {
		display: flex;
		align-items: center;
		height: 23px;
		flex-shrink: 0;
		padding-right: 20px;
		border-bottom: 1px solid #cfcfcf;
		color: #444;
	}

	.tabs__arrows {
		display: flex;
		gap: 18px;
		width: 79px;
		padding-left: 19px;
		color: #217346;
	}

	.tabs__list {
		display: flex;
		flex: 1;
		height: 100%;
		min-width: 0;
		overflow: hidden;
		font-size: 13px;
	}

	.tab {
		flex-shrink: 0;
		padding: 0 10px 0 9px;
		border-bottom: 2px solid transparent;
		border-left: 1px solid #b5b5b5;
		line-height: 20px;
	}

	.tab.is-active {
		padding: 0 9px 0 8px;
		border-bottom-color: #217346;
		background: #fff;
		color: #217346;
		font-weight: 700;
	}

	.tabs__more {
		margin: 0 9px 0 5px;
		color: #217346;
		font-weight: 700;
	}

	.tabs .grip {
		height: 10px;
		margin: 0 12px 0 14px;
	}

	.hscroll {
		display: flex;
		width: 160px;
		justify-content: space-between;
	}

	.hscroll__thumb {
		width: 119px;
		height: 16px;
		margin-right: 8px;
		border: 1px solid #b5b5b5;
		background: #fff;
	}

	/* status bar */

	.status {
		display: flex;
		align-items: center;
		height: 22px;
		flex-shrink: 0;
		padding: 0 5px;
		background: #f2f2ee;
		color: #666;
		font-size: 10px;
	}

	.status__macro {
		margin-left: 26px;
	}

	.status__views {
		display: flex;
		gap: 16px;
		margin-left: auto;
		color: #999;
	}

	.zoom {
		display: flex;
		align-items: center;
		gap: 4px;
		margin-left: 11px;
	}

	.zoom input {
		width: 98px;
		height: 12px;
		appearance: none;
		background: linear-gradient(#aaa, #aaa) center / 100% 1px no-repeat;
	}

	.zoom input::-webkit-slider-thumb {
		appearance: none;
		width: 1px;
		height: 6px;
		background: #999;
	}

	.zoom span {
		padding-left: 5px;
		color: #b0b0b0;
		font-size: 10px;
	}

	/* taskbar */

	.taskbar {
		display: flex;
		height: 40px;
		flex-shrink: 0;
		background: #281c15;
		color: #fff;
	}

	.task {
		position: relative;
		display: flex;
		align-items: center;
		justify-content: center;
		width: 50px;
	}

	.task:first-child {
		width: 48px;
	}

	.task.is-active {
		background: #4f453f;
	}

	.task.is-running::after {
		content: '';
		position: absolute;
		right: 5px;
		bottom: 0;
		left: 5px;
		height: 2px;
		background: #76b0df;
	}

	.task.is-active::after {
		right: 0;
		left: 0;
	}

	.tray {
		display: flex;
		align-items: center;
		margin-left: auto;
		margin-right: 4px;
		border-right: 1px solid #6b625c;
	}

	.tray .bare {
		width: 32px;
		height: 100%;
	}

	.tray .bare:first-child {
		width: 48px;
	}

	.tray__text {
		display: flex;
		flex-direction: column;
		align-items: center;
		line-height: 18px;
	}

	.tray__lang {
		width: 36px;
	}

	.tray__clock {
		width: 75px;
	}

	.tray .tray__notice {
		width: 44px;
		margin-right: 6px;
	}
</style>
